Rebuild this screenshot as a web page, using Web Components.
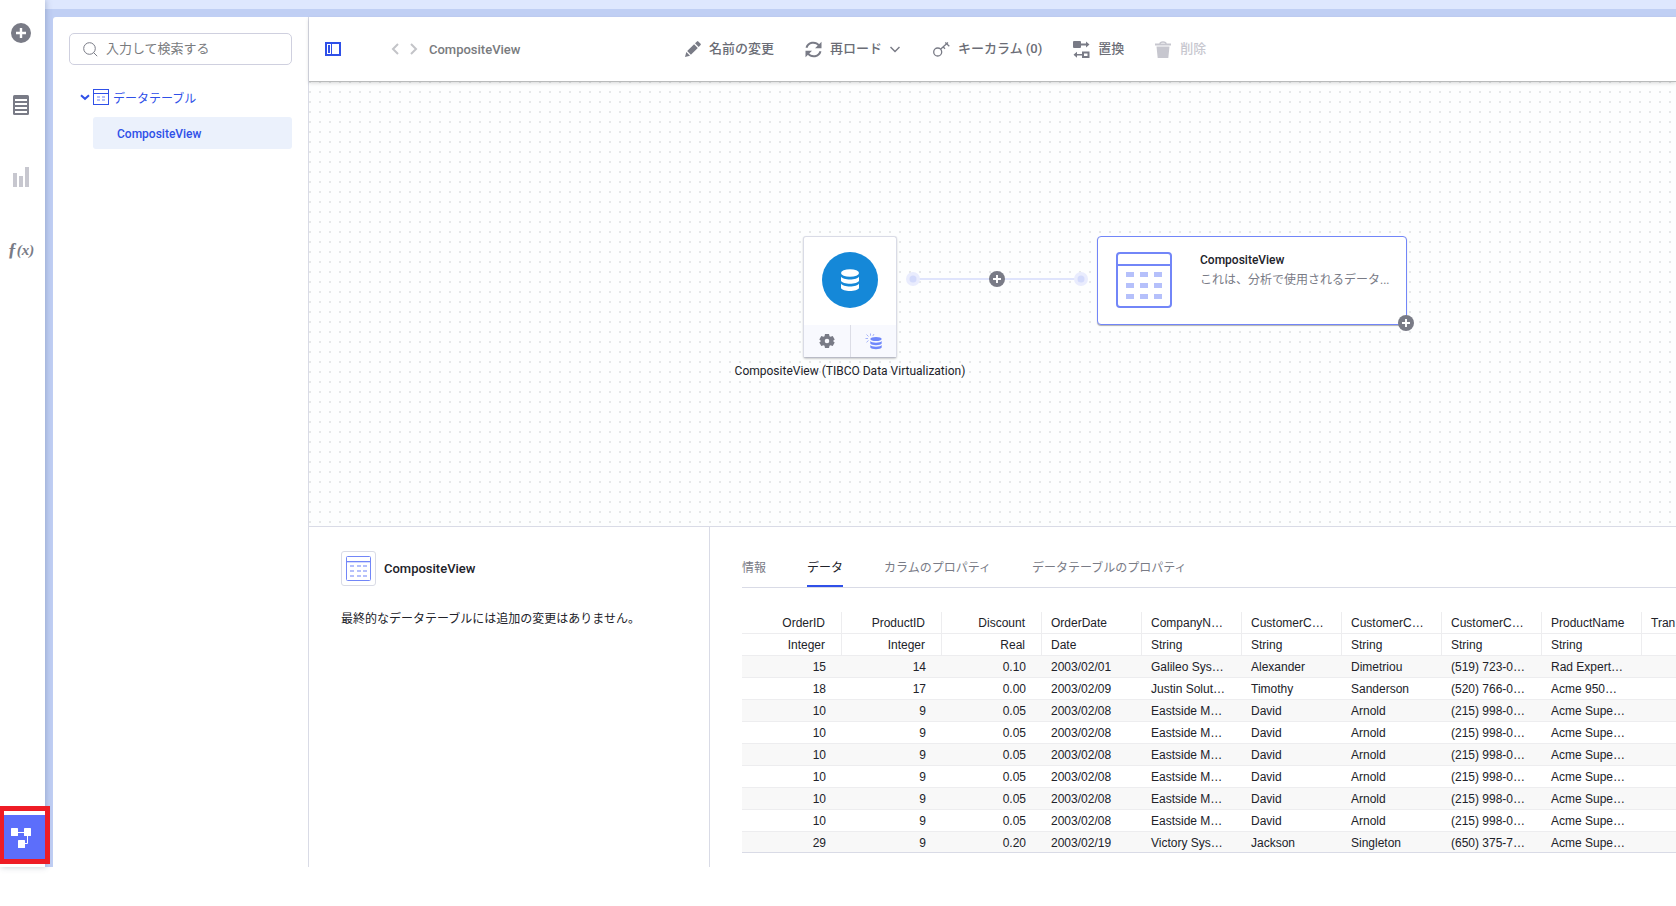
<!DOCTYPE html>
<html lang="ja">
<head>
<meta charset="utf-8">
<title>データキャンバス</title>
<style>
html,body{margin:0;height:100%}
body{background:#fff;font-family:Roboto,"Noto Sans CJK JP",sans-serif;font-size:12px;color:#212229}
</style>
</head>
<body>
<data-canvas-app></data-canvas-app>
<script>
const base = `*,*::after{box-sizing:border-box}button{font:inherit;color:inherit;background:none;border:0;padding:0;margin:0;display:flex;align-items:center;justify-content:center;cursor:pointer}svg{display:block;flex:none}a{color:inherit;text-decoration:none}`;

function define(name, css, html) {
  customElements.define(name, class extends HTMLElement {
    constructor() {
      super();
      this.attachShadow({mode: 'open'}).innerHTML = `<style>${base}${css}</style>${html}`;
    }
  });
}

const plus = (size) => `<svg width="${size}" height="${size}" viewBox="0 0 20 20"><circle cx="10" cy="10" r="10" fill="#797b86"/><path d="M10 5v10M5 10h10" stroke="#fff" stroke-width="2.4"/></svg>`;

const cells = (xs, ys, w, h) => ys.map(y => xs.map(x => `<rect x="${x}" y="${y}" width="${w}" height="${h}" fill="#b5c0fb"/>`).join('')).join('');

/* Left icon rail */
define('nav-rail', `
:host{display:flex;flex-direction:column;width:45px;background:#fff;padding-top:13px;z-index:1;box-shadow:1px 0 6px rgba(60,80,120,.3)}
button{width:42px;height:40px;margin-bottom:32px}
.fx{font:italic bold 18px/20px "Liberation Serif",serif;color:#797b86;padding-top:2px}
.fx span{font-size:15px}
.active{position:relative;margin:auto 0 7px 0;width:45px;height:45px;background:#5c6efb;padding-right:3px}
.active::after{content:"";position:absolute;left:0;top:-9px;width:50px;height:58px;border:5px solid #ee1c25;border-left-width:4px}
`, `
<button aria-label="追加">${plus(20)}</button>
<button aria-label="分析データ"><svg width="16" height="20" viewBox="0 0 16 20"><rect width="16" height="20" rx="1.5" fill="#797b86"/><path d="M2 4.9h12M2 8.9h12M2 12.9h12M2 16.9h12" stroke="#fff" stroke-width="2"/></svg></button>
<button aria-label="ビジュアライゼーション"><svg width="16" height="20" viewBox="0 0 16 20" fill="#c7c7cf"><path d="M0 6h4v14H0zM6 9h4v11H6zM12 0h4v20h-4z"/></svg></button>
<button class="fx" aria-label="関数">ƒ<span>(x)</span></button>
<button class="active" aria-label="データキャンバス"><svg width="20" height="20" viewBox="0 0 20 20"><path d="M5 4.5h10M16.500 6v9.500H12" stroke="#fff" fill="none"/><rect width="7" height="8" rx=".6" fill="#fff"/><rect x="13" width="7" height="8" rx=".6" fill="#fff"/><rect x="7" y="12" width="7" height="8" rx=".6" fill="#fff"/></svg></button>
`);

/* Search and tree of data tables */
define('table-tree', `
:host{display:block;width:256px;flex:none;border-right:1px solid #d9dbe6;padding:16px 16px;color:#2f50e8}
label{display:flex;align-items:center;height:32px;border:1px solid #cfd0df;border-radius:5px;padding:0 13px;gap:8px}
input{border:0;outline:0;padding:0 0 2px;flex:1;min-width:0;font:inherit;font-size:13px;color:#61646b;background:none}
input::placeholder{color:#797b7e;opacity:1}
.group{width:100%;justify-content:flex-start;height:32px;margin-top:16px;padding-left:11px;font-size:12px}
.group span{margin-left:4px}
.item{display:flex;align-items:center;height:32px;margin:4px 0 0 24px;padding:2px 0 0 24px;background:#ebf1fc;border-radius:3px;font-weight:500}
`, `
<label><svg width="15" height="15" viewBox="0 0 15 15" fill="none" stroke="#797b86"><circle cx="6.500" cy="6.500" r="5.800"/><path d="M10.600 10.600l3.600 3.600"/></svg><input type="text" placeholder="入力して検索する" aria-label="入力して検索する"></label>
<button class="group"><svg width="10" height="7" viewBox="0 0 10 7"><path d="M1 1.200l4 3.600 4-3.600" fill="none" stroke="#2f50e8" stroke-width="2"/></svg>
<svg width="16" height="16" viewBox="0 0 16 16" style="margin-left:3px"><rect x=".5" y=".5" width="15" height="15" fill="#fff" stroke="#2f50e8"/><path d="M0 4.500h16" stroke="#2f50e8"/>${cells([4,9],[7,10],3,2)}</svg><span>データテーブル</span></button>
<a class="item" href="#composite">CompositeView</a>
`);

/* Toolbar action: icon in a slot, text by default */
define('tool-button', `
:host{display:block}
button{color:#6b6d76;font-weight:500;font-size:13px;line-height:20px;gap:8px}
:host([off]) button{color:#c7c7cf}
`, `<button><slot name="icon"></slot><span><slot></slot></span><slot name="end"></slot></button>`);

define('canvas-toolbar', `
:host{display:flex;align-items:center;height:64px;flex:none;background:#fff;padding-left:16px;position:relative;z-index:1;box-shadow:0 1px 0 #b9bbbb,0 2px 4px rgba(0,0,0,.16)}
.nav{margin-left:50px;gap:11px;display:flex}
.title{margin-left:11px;padding-top:2px;font-weight:500;font-size:13px;line-height:20px;color:#797b7e;width:256px;flex:none}
.tools{display:flex}
`, `
<button aria-label="パネルの表示切替"><svg width="16" height="14" viewBox="0 0 16 14"><rect x="1" y="1" width="14" height="12" fill="#fff" stroke="#2f50e8" stroke-width="2"/><path d="M3 3h2v8H3zM6 2h1v10H6z" fill="#2f50e8"/></svg></button>
<div class="nav"><button aria-label="戻る"><svg width="8" height="12" viewBox="0 0 8 12"><path d="M7 1L2 6 7 11" fill="none" stroke="#c3c4c8" stroke-width="2"/></svg></button>
<button aria-label="進む"><svg width="8" height="12" viewBox="0 0 8 12"><path d="M1 1L6 6 1 11" fill="none" stroke="#c3c4c8" stroke-width="2"/></svg></button></div>
<span class="title">CompositeView</span>
<div class="tools">
<tool-button><svg slot="icon" width="16" height="16" viewBox="0 0 16 16" fill="#797b86"><path d="M0 16l1.300-5 3.700 3.700zM2.200 10.100l6.900-6.900 3.700 3.700-6.900 6.900zM10 2.300L12 .4q.7-.6 1.300 0l2.300 2.300q.6.600 0 1.300l-1.900 2z"/></svg>名前の変更</tool-button>
<tool-button style="margin-left:31px"><svg slot="icon" width="17" height="17" viewBox="0 0 17 17" fill="none" stroke="#797b86" stroke-width="2"><path d="M1.500 6.800C3 1.200 10.300-.2 14 4.500M15.500 10.200C14 15.800 6.700 17.200 3 12.500"/><path d="M16.500.8v6.500H10zM.5 16.200V9.700H7z" fill="#797b86" stroke="none"/></svg>再ロード<svg slot="end" width="10" height="7" viewBox="0 0 10 7"><path d="M.5 1l4.500 4.500L9.500 1" fill="none" stroke="#797b86" stroke-width="1.500"/></svg></tool-button>
<tool-button style="margin-left:33px"><svg slot="icon" width="17" height="16" viewBox="0 0 17 16" fill="none" stroke="#797b86" stroke-width="1.300"><circle cx="4.700" cy="11" r="4"/><path d="M7.500 8.200L15 1.500M12.300 1.500l4 3.700M10 5.800l2 2"/></svg>キーカラム (0)</tool-button>
<tool-button style="margin-left:31px"><svg slot="icon" width="17" height="17" viewBox="0 0 17 17" fill="#797b86"><rect y="0" width="8" height="7" rx="1"/><path d="M8 2.500h5V.5L16.500 3.500 13 6.500V4.500H8zM9 10.500h7.500V17H9zm2 2V15h3.500v-2.500zM9 13H4v-2.300L.5 13.700 4 16.700v-2.200h5z" fill-rule="evenodd"/></svg>置換</tool-button>
<tool-button off style="margin-left:31px"><svg slot="icon" width="17" height="17" viewBox="0 0 17 17" fill="#c7c7cf"><path d="M0 2.500h16v2H0zM1.500 5.500h13L13.300 17H2.700z"/><path d="M5 3q0-2 3-2t3 2" fill="none" stroke="#c7c7cf" stroke-width="1.500"/></svg>削除</tool-button>
</div>
`);

/* Free canvas with source node, link and result node */
define('flow-canvas', `
:host{display:block;box-sizing:border-box;position:relative;flex:none;height:446px;background-color:#fdfefe;background-image:radial-gradient(circle,#e6e8e9 1px,transparent 1px);background-size:10px 10px;background-position:6px 6px;border-bottom:1px solid #d9dbe6;overflow:hidden}
.source{position:absolute;left:494px;top:155px;width:94px;height:122px;background:#fff;border:1px solid #d9dbe6;border-bottom-color:#b9bbc6;border-radius:3px;box-shadow:0 1px 2px rgba(0,0,0,.2);display:flex;flex-direction:column}
.logo{height:88px;display:flex;align-items:flex-start;justify-content:center;padding-top:15px}
.acts{flex:1;display:flex;background:#f8f9fe}
.acts button{flex:1}
.acts button+button{border-left:1px solid #dcdde6}
.cap{position:absolute;left:421px;width:240px;top:281px;line-height:18px;text-align:center}
.link{position:absolute;left:597px;top:191px}
.add{position:absolute;left:680px;top:190px}
.result{position:absolute;left:788px;top:155px;width:310px;height:89px;background:#fff;border:1px solid #7286f8;border-radius:4px;box-shadow:0 1px 1px rgba(0,0,0,.3);display:flex;padding:15px 12px 0 18px;gap:28px}
.result div{flex:1;min-width:0}
h2{margin:0;font-size:12px;line-height:16px;font-weight:500}
p{margin:2px 0 0;line-height:20px;font-size:12px;color:#797b86;white-space:nowrap}
.add2{position:absolute;left:1089px;top:234px}
`, `
<div class="source">
<div class="logo"><svg width="56" height="56" viewBox="0 0 56 56"><circle cx="28" cy="28" r="28" fill="#1588d8"/><g fill="#fff"><ellipse cx="28" cy="21" rx="9" ry="3.800"/><path d="M19 24.500c1.500 4 16.500 4 18 0v4.300c-1.500 4-16.500 4-18 0zM19 31.500c1.500 4 16.500 4 18 0V36c-1.500 4-16.500 4-18 0z"/></g></svg></div>
<div class="acts"><button aria-label="設定"><svg width="16" height="16" viewBox="0 0 16 16"><path fill="#797b86" fill-rule="evenodd" d="M6 1h4l.5 2.200 1 .6 2.200-.7 2 3.400L14 8l1.700 1.500-2 3.400-2.200-.7-1 .6L10 15H6l-.5-2.200-1-.6-2.200.7-2-3.400L2 8 .3 6.500l2-3.400 2.200.7 1-.6zM8 5.700a2.300 2.300 0 1 0 0 4.600 2.300 2.300 0 0 0 0-4.600z"/></svg></button>
<button aria-label="データの取得"><svg width="17" height="17" viewBox="0 0 17 17" fill="#7088fb"><ellipse cx="11" cy="6" rx="5.700" ry="2.100"/><path d="M5.300 8c1 2.300 10.400 2.300 11.400 0v2.600c-1 2.300-10.400 2.300-11.400 0zM5.300 12c1 2.300 10.400 2.300 11.400 0v2.600c-1 2.300-10.400 2.300-11.400 0z"/><path d="M5.500.5v2.200M1.500 1.500L3.500 3.500M.5 5.500h2.500M3.500 7.500L1.500 9.300M9 1L7.800 3" stroke="#a5b3fb" fill="none"/></svg></button></div>
</div>
<div class="cap">CompositeView (TIBCO Data Virtualization)</div>
<svg class="link" width="182" height="16" viewBox="0 0 182 16"><path d="M7 7h168" stroke="#dfe4fc" stroke-width="2"/><g fill="#e9ecfd"><circle cx="7" cy="7" r="7"/><circle cx="175" cy="7" r="7"/></g><g fill="#d3dafb"><circle cx="7" cy="7" r="3.500"/><circle cx="175" cy="7" r="3.500"/></g></svg>
<button class="add" aria-label="変換を追加">${plus(16)}</button>
<div class="result"><svg width="56" height="56" viewBox="0 0 56 56"><rect x="1" y="1" width="54" height="54" rx="3" fill="#fff" stroke="#7286f8" stroke-width="2"/><path d="M1 13h54" stroke="#7286f8" stroke-width="2"/>${cells([10,24,38],[20,31,42],8,5)}</svg>
<div><h2>CompositeView</h2><p>これは、分析で使用されるデータ...</p></div></div>
<button class="add2" aria-label="行またはカラムを追加">${plus(16)}</button>
`);

define('node-details', `
:host{display:block;box-sizing:border-box;width:401px;flex:none;border-right:1px solid #d9dbe6;padding:24px 32px}
header{display:flex;align-items:center;gap:8px;font-size:13px;font-weight:500}
.ic{width:35px;height:35px;border:1px solid #d9dbe6;border-radius:3px;display:flex;align-items:center;justify-content:center}
p{margin:23px 0 0;line-height:20px;font-size:12px}
`, `
<header><span class="ic"><svg width="25" height="25" viewBox="0 0 25 25"><rect x=".5" y=".5" width="24" height="24" rx="1" fill="#fff" stroke="#7286f8"/><path d="M0 5.500h25" stroke="#7286f8"/><path d="M1 6.500h23" stroke="#d5dbfd"/>${cells([4,11,17],[9,14,19],4,2)}</svg></span><span>CompositeView</span></header>
<p>最終的なデータテーブルには追加の変更はありません。</p>
`);

const columns = [['OrderID','Integer'],['ProductID','Integer'],['Discount','Real'],['OrderDate','Date'],['CompanyN…','String'],['CustomerC…','String'],['CustomerC…','String'],['CustomerC…','String'],['ProductName','String'],['Tran','']];
const repeated = ['10','9','0.05','2003/02/08','Eastside M…','David','Arnold','(215) 998-0…','Acme Supe…',''];
const rows = [
  ['15','14','0.10','2003/02/01','Galileo Sys…','Alexander','Dimetriou','(519) 723-0…','Rad Expert…',''],
  ['18','17','0.00','2003/02/09','Justin Solut…','Timothy','Sanderson','(520) 766-0…','Acme 950…',''],
  ...Array(6).fill(repeated),
  ['29','9','0.20','2003/02/19','Victory Sys…','Jackson','Singleton','(650) 375-7…','Acme Supe…','']
];
const tr = (cellsOf, tag) => `<tr>${cellsOf.map(c => `<${tag}>${c}</${tag}>`).join('')}</tr>`;

define('data-grid', `
:host{display:block;overflow:hidden;border-bottom:1px solid #d9dbe6}
table{border-collapse:separate;border-spacing:0;table-layout:fixed;width:1000px;font:12px/19px "Liberation Sans",Arial,sans-serif}
th,td{width:100px;height:22px;padding:2px 9px 0;vertical-align:top;text-align:left;font-weight:normal;white-space:nowrap;overflow:hidden;border-bottom:1px solid #ededef}
th{border-right:1px solid #ededef}
th:nth-child(-n+3),td:nth-child(-n+3){text-align:right;padding-right:16px}
tbody tr:nth-child(odd){background:#f8f8f8}
tbody tr:last-child td{border-bottom:0;height:20px;line-height:18px}
`, `<table><thead>${tr(columns.map(c => c[0]), 'th')}${tr(columns.map(c => c[1]), 'th')}</thead><tbody>${rows.map(r => tr(r, 'td')).join('')}</tbody></table>`);

define('data-preview', `
:host{display:block;flex:1;min-width:0;padding:25px 0 14px 32px}
nav{display:flex;gap:41px;height:36px;border-bottom:1px solid #d9dbe6;font-size:12px;line-height:32px;color:#797b86}
nav button{height:35px;line-height:32px;padding-bottom:3px;display:block}
nav .on{color:#212229;border-bottom:2px solid #2f50e8;padding-bottom:1px}
data-grid{margin-top:24px}
`, `
<nav><button>情報</button><button class="on">データ</button><button>カラムのプロパティ</button><button>データテーブルのプロパティ</button></nav>
<data-grid></data-grid>
`);

define('data-canvas-app', `
:host{display:flex}
.frame{flex:1;min-width:0;display:flex;flex-direction:column;background:#c0cff4}
.strip{height:9px;flex:none;background:#dee7fe}
.panel{flex:1;margin:8px 0 0 8px;display:flex;background:#fff;border-radius:3px 0 0 0}
main{flex:1;min-width:0;display:flex;flex-direction:column}
.lower{flex:1;display:flex}
`, `
<nav-rail></nav-rail>
<div class="frame"><div class="strip"></div>
<div class="panel"><table-tree></table-tree>
<main><canvas-toolbar></canvas-toolbar><flow-canvas></flow-canvas>
<div class="lower"><node-details></node-details><data-preview></data-preview></div></main></div></div>
`);
</script>
</body>
</html>
